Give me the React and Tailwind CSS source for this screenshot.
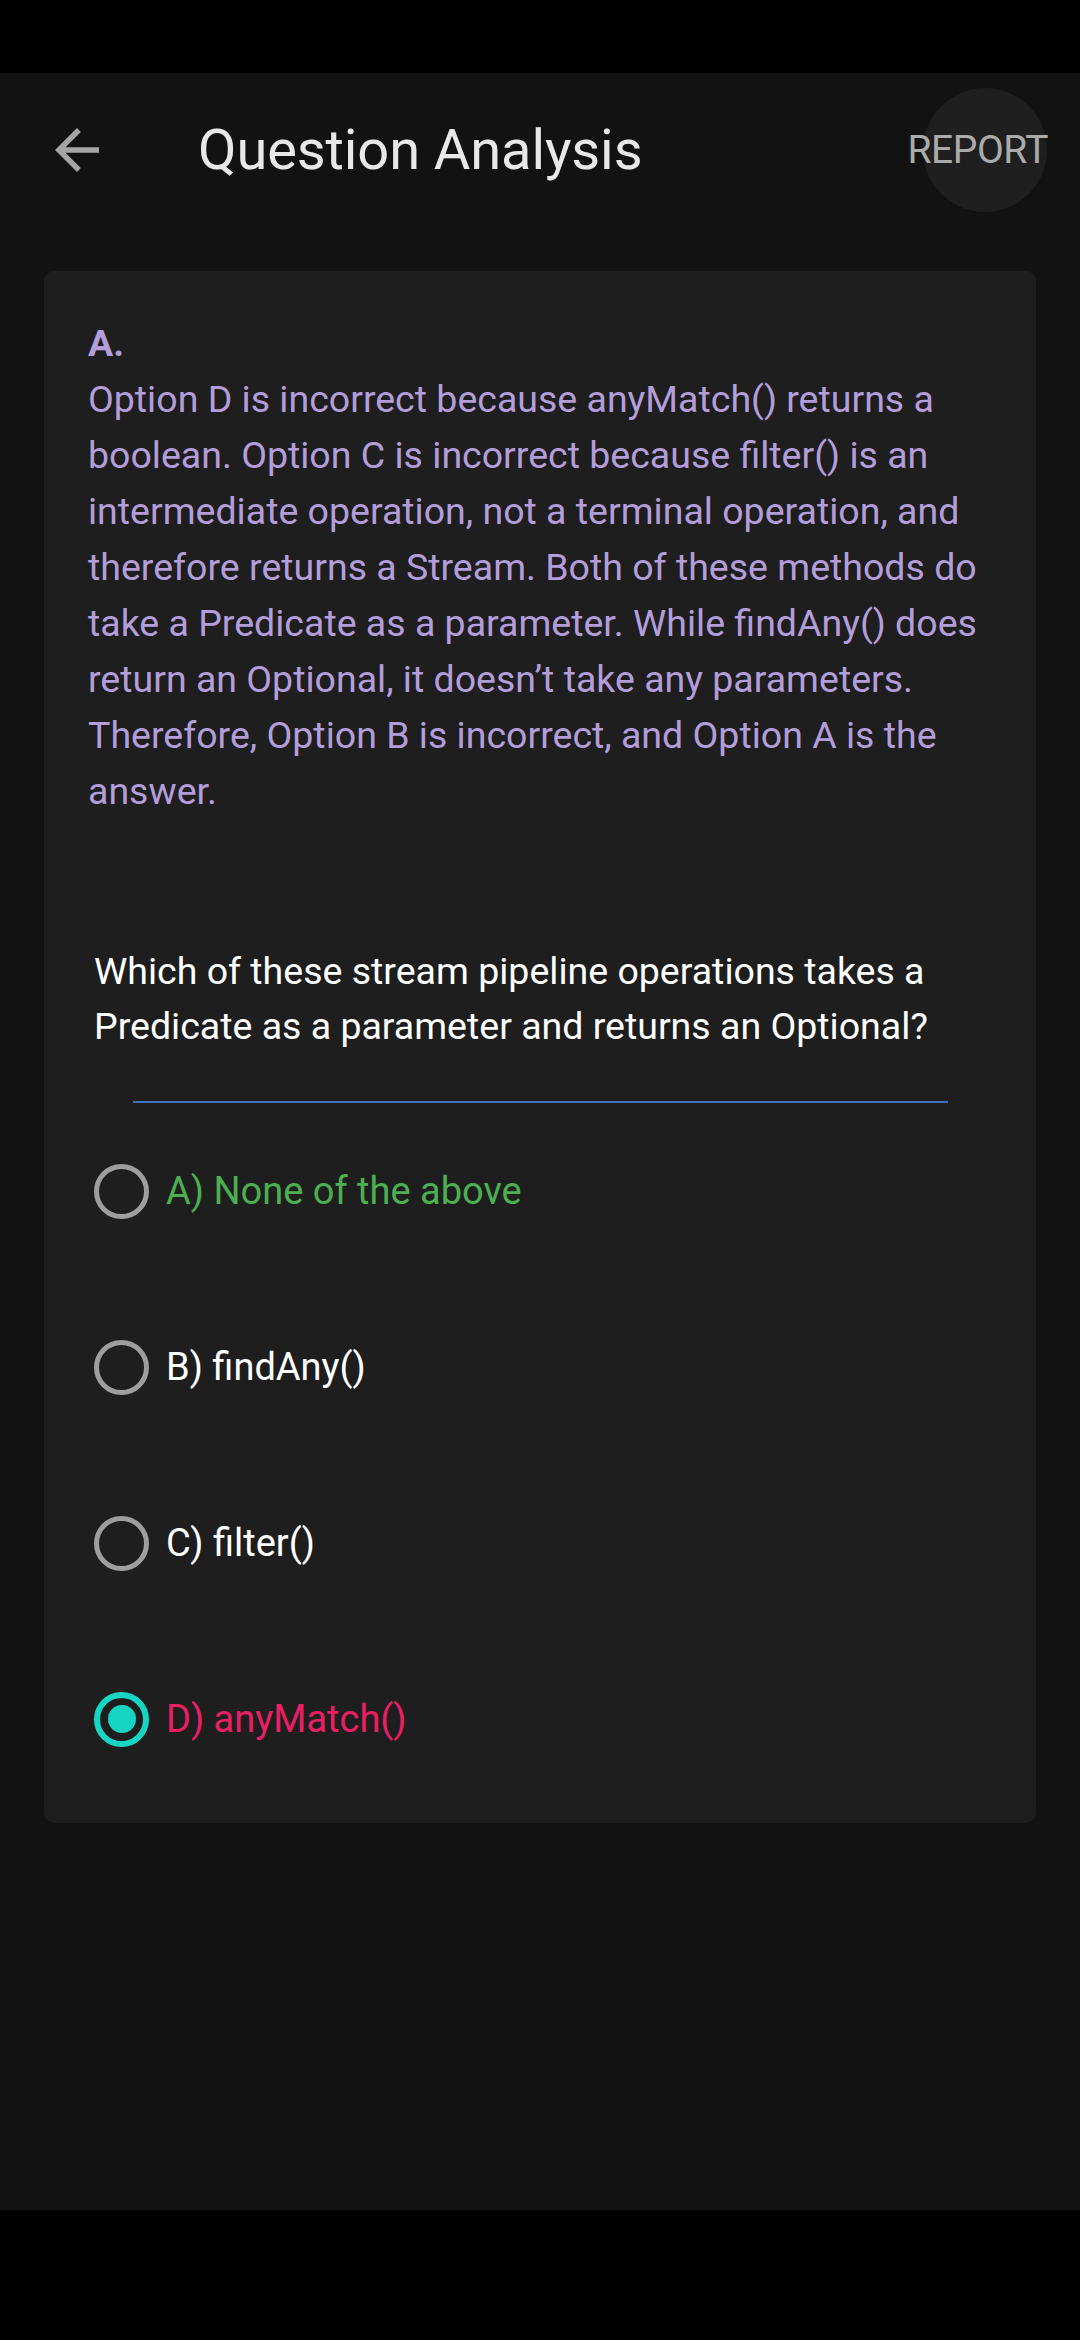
import React from 'react';

const explanation =
  'Option D is incorrect because anyMatch() returns a boolean. Option C is incorrect because filter() is an intermediate operation, not a terminal operation, and therefore returns a Stream. Both of these methods do take a Predicate as a parameter. While findAny() does return an Optional, it doesn\u2019t take any parameters. Therefore, Option B is incorrect, and Option A is the answer.';

const options = [
  { label: 'A) None of the above', color: 'text-[#4caf50]', selected: false },
  { label: 'B) findAny()', color: 'text-white', selected: false },
  { label: 'C) filter()', color: 'text-white', selected: false },
  { label: 'D) anyMatch()', color: 'text-[#e91e63]', selected: true },
];

const Radio = ({ selected }) => {
  if (selected) {
    return (
      <div className="w-[55px] h-[55px] rounded-full border-[6px] border-[#17d5c3] flex items-center justify-center shrink-0">
        <div className="w-[28px] h-[28px] rounded-full bg-[#17d5c3]" />
      </div>
    );
  }
  return <div className="w-[55px] h-[55px] rounded-full border-[5px] border-[#9e9e9e] shrink-0" />;
};

const App = () => {
  return (
    <div className="w-[1080px] h-[2340px] bg-black flex flex-col font-['Roboto',sans-serif]">
      <div className="h-[73px] bg-black" />

      <div className="flex-1 bg-[#121212] flex flex-col">
        {/* toolbar */}
        <div className="h-[154px] flex items-center pl-[44px] pr-[32px]">
          <svg viewBox="0 0 24 24" className="w-[66px] h-[66px] fill-[#a5a5a5]">
            <path d="M20 11H7.83l5.59-5.59L12 4l-8 8 8 8 1.41-1.41L7.83 13H20v-2z" />
          </svg>
          <h1 className="ml-[88px] text-[56px] text-[#e8e8e8] tracking-[-0.1px]">
            Question Analysis
          </h1>
          <div className="ml-auto relative flex items-center">
            <div className="absolute left-[15px] top-1/2 -translate-y-1/2 w-[124px] h-[124px] rounded-full bg-[#1f1f1f]" />
            <span className="relative text-[39px] text-[#ababab] tracking-[-0.5px]">REPORT</span>
          </div>
        </div>

        {/* card */}
        <div className="mx-[44px] mt-[44px] bg-[#1e1e1e] rounded-[10px] pt-[44px] px-[44px] pb-[16px]">
          <div className="text-[#b39ddb] text-[37.5px] leading-[56px]">
            <p className="font-bold">A.</p>
            <p>{explanation}</p>
          </div>

          <p className="mt-[125px] ml-[6px] text-white text-[37.5px] leading-[55px]">
            Which of these stream pipeline operations takes a Predicate as a parameter and returns an Optional?
          </p>

          <div className="mt-[47px] mx-auto w-[815px] h-[2px] bg-[#3d70b8]" />

          <div className="flex flex-col">
            {options.map((opt) => (
              <div key={opt.label} className="h-[176px] flex items-center ml-[6px] gap-[17px]">
                <Radio selected={opt.selected} />
                <span className={`text-[38px] ${opt.color}`}>{opt.label}</span>
              </div>
            ))}
          </div>
        </div>
      </div>

      <div className="h-[130px] bg-black" />
    </div>
  );
};

export default App;
